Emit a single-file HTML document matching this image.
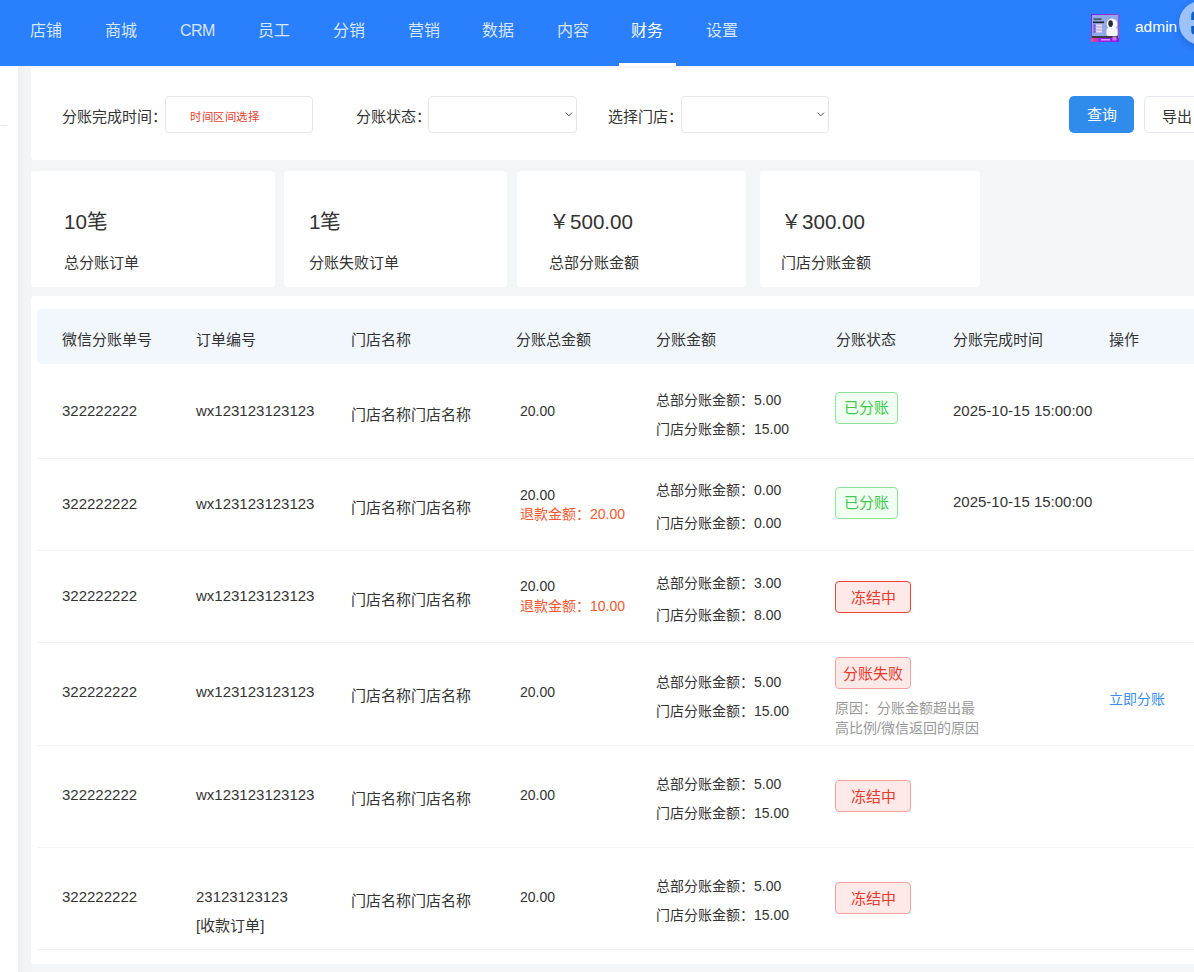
<!DOCTYPE html>
<html lang="zh-CN"><head><meta charset="utf-8">
<style>
*{margin:0;padding:0;box-sizing:border-box;}
html,body{width:1194px;height:972px;overflow:hidden;}
body{position:relative;background:#f4f5f7;font-family:"Liberation Sans",sans-serif;color:#333;}
.a{position:absolute;white-space:nowrap;}
#nav{position:absolute;left:0;top:0;width:1194px;height:66px;background:#2a7ffd;}
.ni{position:absolute;top:19px;font-size:16px;line-height:24px;color:rgba(255,255,255,0.82);}
.ni.act{color:#fff;}
#uline{position:absolute;left:619px;top:63px;width:57px;height:3px;background:#fff;}
#side{position:absolute;left:0;top:66px;width:18px;height:906px;background:#fff;}
#sideline{position:absolute;left:0;top:125px;width:7px;height:1px;background:#e8e9ee;}
#strip{position:absolute;left:18px;top:66px;width:13px;height:906px;background:#f3f4f6;}
#strip2{position:absolute;left:18px;top:66px;width:4px;height:906px;background:#eff0f3;}
#strip3{position:absolute;left:22px;top:66px;width:2px;height:906px;background:#f0f2f5;}
.card{position:absolute;background:#fff;border-radius:4px;}
.lbl{font-size:15px;line-height:20px;color:#333;}
.inp{position:absolute;border:1px solid #e6e7e9;border-radius:4px;background:#fff;}
.chev{position:absolute;width:8px;height:5px;}
.big{font-size:20.6px;line-height:26px;color:#333;padding-top:1px;}
.sl{font-size:15px;line-height:20px;color:#333;}
.th{font-size:15px;line-height:20px;color:#333;}
.td{font-size:15px;line-height:20px;color:#333;}
.sm{font-size:14px;line-height:18px;color:#333;}
.ref{font-size:14px;line-height:18px;color:#f5582e;}
.tag{position:absolute;border-radius:4px;font-size:15px;text-align:center;}
.tr{padding-top:1px;}
.tg{border:1px solid #8fe39a;background:#f0fff2;color:#3dc84e;}
.tr{border:1px solid #f3a39d;background:#fde9e8;color:#e8382c;}
.hl{position:absolute;left:37px;width:1157px;height:1px;background:#f3f3f4;}
</style></head><body>
<div id="nav">
  <div class="ni a" style="left:30px">店铺</div>
  <div class="ni a" style="left:105px">商城</div>
  <div class="ni a" style="left:180px;letter-spacing:-0.5px">CRM</div>
  <div class="ni a" style="left:258px">员工</div>
  <div class="ni a" style="left:333px">分销</div>
  <div class="ni a" style="left:408px">营销</div>
  <div class="ni a" style="left:482px">数据</div>
  <div class="ni a" style="left:557px">内容</div>
  <div class="ni a act" style="left:631px">财务</div>
  <div class="ni a" style="left:706px">设置</div>
  <div id="uline"></div>
  <svg class="a" style="left:1091px;top:14px;" width="28" height="28" viewBox="0 0 28 28">
<defs><linearGradient id="bd" x1="0" y1="0" x2="1" y2="1"><stop offset="0" stop-color="#7a1cf0"/><stop offset="1" stop-color="#e0509a"/></linearGradient>
<linearGradient id="bt" x1="0" y1="0" x2="1" y2="0"><stop offset="0" stop-color="#f0508a"/><stop offset="0.35" stop-color="#a01ee8"/><stop offset="1" stop-color="#8a1ee8"/></linearGradient></defs>
<rect x="0" y="0" width="28" height="28" fill="url(#bd)"/>
<rect x="1" y="1" width="26" height="21.5" fill="#8ea9e6"/>
<rect x="2.5" y="4.5" width="8" height="1.2" fill="#333"/>
<rect x="2" y="7.5" width="11" height="1.6" fill="#222"/>
<rect x="2.5" y="10.5" width="2" height="2.2" fill="#7a3cf0"/><rect x="5" y="10.5" width="6" height="2" fill="#f4d6ee"/>
<rect x="2.5" y="13.5" width="2" height="2.2" fill="#7a3cf0"/><rect x="5" y="13.5" width="6" height="2" fill="#f4d6ee"/>
<rect x="2.5" y="16.5" width="2" height="2.2" fill="#7a3cf0"/><rect x="5" y="16.5" width="6" height="2" fill="#f4d6ee"/>
<ellipse cx="21" cy="10" rx="5.3" ry="5.6" fill="#fafafa"/>
<ellipse cx="19.6" cy="9.6" rx="2.3" ry="3.4" fill="#2a2a35"/>
<rect x="15.5" y="14" width="11" height="8" rx="2" fill="#f4f4f6"/>
<rect x="1" y="22" width="26" height="2.2" fill="#3a3a44"/>
<rect x="0" y="24" width="28" height="4" fill="url(#bt)"/>
<rect x="10" y="25.2" width="9" height="1.2" fill="#d8b8f8"/>
<rect x="21.5" y="22.5" width="4" height="4" fill="#d070f0"/>
</svg>
  <div class="a" style="left:1135px;top:17px;font-size:15.5px;line-height:20px;color:#fff;">admin</div>
  <div class="a" style="left:1179px;top:1px;width:44px;height:44px;border-radius:50%;background:#9dc1fb;box-shadow:-1px 3px 6px rgba(0,40,140,0.22);"></div>
<svg class="a" style="left:1190px;top:10px;" width="6" height="26" viewBox="0 0 6 26"><path d="M2.6,10 V5.5 Q2.6,2.8 5.5,2.6 H6" fill="none" stroke="#0a60cf" stroke-width="2.8"/><path d="M2.6,16 V20.5 Q2.6,23.2 5.5,23.4 H6" fill="none" stroke="#0a60cf" stroke-width="2.8"/></svg>
</div>
<div id="side"></div><div id="sideline"></div>
<div id="strip"></div><div id="strip2"></div><div id="strip3"></div>

<!-- filter card -->
<div class="card" style="left:31px;top:68px;width:1180px;height:92px;"></div>
<div class="a lbl" style="left:62px;top:107px;">分账完成时间：</div>
<div class="inp" style="left:165px;top:96px;width:148px;height:37px;"></div>
<div class="a" style="left:190px;top:109px;font-size:11.4px;line-height:17px;letter-spacing:0.55px;color:#e8412e;">时间区间选择</div>
<div class="a lbl" style="left:356px;top:107px;">分账状态：</div>
<div class="inp" style="left:428px;top:96px;width:149px;height:37px;"></div>
<svg class="chev" style="left:565px;top:112px;" viewBox="0 0 8 5"><polyline points="0.6,0.6 3.8,3.9 7,0.6" fill="none" stroke="#555" stroke-width="1"/></svg>
<div class="a lbl" style="left:608px;top:107px;">选择门店：</div>
<div class="inp" style="left:681px;top:96px;width:148px;height:37px;"></div>
<svg class="chev" style="left:817px;top:112px;" viewBox="0 0 8 5"><polyline points="0.6,0.6 3.8,3.9 7,0.6" fill="none" stroke="#555" stroke-width="1"/></svg>
<div class="a" style="left:1069px;top:96px;width:65px;height:37px;background:#2f8bec;border-radius:5px;color:#fff;font-size:15px;line-height:37px;text-align:center;">查询</div>
<div class="a" style="left:1144px;top:96px;width:70px;height:37px;background:#fff;border:1px solid #e4e7ed;border-radius:5px;"></div>
<div class="a lbl" style="left:1162px;top:107px;">导出</div>

<!-- stats -->
<div class="card" style="left:31px;top:171px;width:244px;height:116px;"></div>
<div class="card" style="left:284px;top:171px;width:223px;height:116px;"></div>
<div class="card" style="left:517px;top:171px;width:229px;height:116px;"></div>
<div class="card" style="left:760px;top:171px;width:220px;height:116px;"></div>
<div class="a big" style="left:64px;top:208px;">10笔</div>
<div class="a sl" style="left:64px;top:253px;">总分账订单</div>
<div class="a big" style="left:309px;top:208px;">1笔</div>
<div class="a sl" style="left:309px;top:253px;">分账失败订单</div>
<div class="a big" style="left:549px;top:208px;">￥500.00</div>
<div class="a sl" style="left:549px;top:253px;">总部分账金额</div>
<div class="a big" style="left:781px;top:208px;">￥300.00</div>
<div class="a sl" style="left:781px;top:253px;">门店分账金额</div>

<!-- table -->
<div class="card" style="left:31px;top:296px;width:1180px;height:668px;"></div>
<div class="a" style="left:37px;top:309px;width:1170px;height:55px;background:#f2f7fd;border-radius:4px;"></div>
<div class="a th" style="left:62px;top:330px;">微信分账单号</div>
<div class="a th" style="left:196px;top:330px;">订单编号</div>
<div class="a th" style="left:351px;top:330px;">门店名称</div>
<div class="a th" style="left:516px;top:330px;">分账总金额</div>
<div class="a th" style="left:656px;top:330px;">分账金额</div>
<div class="a th" style="left:836px;top:330px;">分账状态</div>
<div class="a th" style="left:953px;top:330px;">分账完成时间</div>
<div class="a th" style="left:1109px;top:330px;">操作</div>

<div class="hl" style="top:458px"></div>
<div class="hl" style="top:550px"></div>
<div class="hl" style="top:642px"></div>
<div class="hl" style="top:745px"></div>
<div class="hl" style="top:847px"></div>
<div class="hl" style="top:949px"></div>

<!-- row1 -->
<div class="a td" style="left:62px;top:401px;">322222222</div>
<div class="a td" style="left:196px;top:401px;">wx123123123123</div>
<div class="a td" style="left:351px;top:405px;">门店名称门店名称</div>
<div class="a sm" style="left:520px;top:402px;">20.00</div>
<div class="a sm" style="left:656px;top:391px;">总部分账金额：5.00</div>
<div class="a sm" style="left:656px;top:420px;">门店分账金额：15.00</div>
<div class="tag tg" style="left:835px;top:392px;width:63px;height:32px;line-height:30px;">已分账</div>
<div class="a td" style="left:953px;top:401px;">2025-10-15 15:00:00</div>

<!-- row2 -->
<div class="a td" style="left:62px;top:494px;">322222222</div>
<div class="a td" style="left:196px;top:494px;">wx123123123123</div>
<div class="a td" style="left:351px;top:498px;">门店名称门店名称</div>
<div class="a sm" style="left:520px;top:486px;">20.00</div>
<div class="a ref" style="left:520px;top:505px;">退款金额：20.00</div>
<div class="a sm" style="left:656px;top:481px;">总部分账金额：0.00</div>
<div class="a sm" style="left:656px;top:514px;">门店分账金额：0.00</div>
<div class="tag tg" style="left:835px;top:487px;width:63px;height:32px;line-height:30px;">已分账</div>
<div class="a td" style="left:953px;top:492px;">2025-10-15 15:00:00</div>

<!-- row3 -->
<div class="a td" style="left:62px;top:586px;">322222222</div>
<div class="a td" style="left:196px;top:586px;">wx123123123123</div>
<div class="a td" style="left:351px;top:590px;">门店名称门店名称</div>
<div class="a sm" style="left:520px;top:577px;">20.00</div>
<div class="a ref" style="left:520px;top:597px;">退款金额：10.00</div>
<div class="a sm" style="left:656px;top:574px;">总部分账金额：3.00</div>
<div class="a sm" style="left:656px;top:606px;">门店分账金额：8.00</div>
<div class="tag tr" style="left:835px;top:581px;width:76px;height:32px;line-height:30px;border-color:#ee4236;">冻结中</div>

<!-- row4 -->
<div class="a td" style="left:62px;top:682px;">322222222</div>
<div class="a td" style="left:196px;top:682px;">wx123123123123</div>
<div class="a td" style="left:351px;top:686px;">门店名称门店名称</div>
<div class="a sm" style="left:520px;top:683px;">20.00</div>
<div class="a sm" style="left:656px;top:673px;">总部分账金额：5.00</div>
<div class="a sm" style="left:656px;top:702px;">门店分账金额：15.00</div>
<div class="tag tr" style="left:835px;top:657px;width:76px;height:32px;line-height:30px;">分账失败</div>
<div class="a" style="left:835px;top:698px;font-size:14px;line-height:20px;color:#999;">原因：分账金额超出最</div>
<div class="a" style="left:835px;top:718px;font-size:14px;line-height:20px;color:#999;">高比例/微信返回的原因</div>
<div class="a" style="left:1109px;top:690px;font-size:14px;line-height:18px;color:#3b8ff0;">立即分账</div>

<!-- row5 -->
<div class="a td" style="left:62px;top:785px;">322222222</div>
<div class="a td" style="left:196px;top:785px;">wx123123123123</div>
<div class="a td" style="left:351px;top:789px;">门店名称门店名称</div>
<div class="a sm" style="left:520px;top:786px;">20.00</div>
<div class="a sm" style="left:656px;top:775px;">总部分账金额：5.00</div>
<div class="a sm" style="left:656px;top:804px;">门店分账金额：15.00</div>
<div class="tag tr" style="left:835px;top:780px;width:76px;height:32px;line-height:30px;">冻结中</div>

<!-- row6 -->
<div class="a td" style="left:62px;top:887px;">322222222</div>
<div class="a td" style="left:196px;top:887px;">23123123123</div>
<div class="a td" style="left:196px;top:916px;">[收款订单]</div>
<div class="a td" style="left:351px;top:891px;">门店名称门店名称</div>
<div class="a sm" style="left:520px;top:888px;">20.00</div>
<div class="a sm" style="left:656px;top:877px;">总部分账金额：5.00</div>
<div class="a sm" style="left:656px;top:906px;">门店分账金额：15.00</div>
<div class="tag tr" style="left:835px;top:882px;width:76px;height:32px;line-height:30px;">冻结中</div>
</body></html>
